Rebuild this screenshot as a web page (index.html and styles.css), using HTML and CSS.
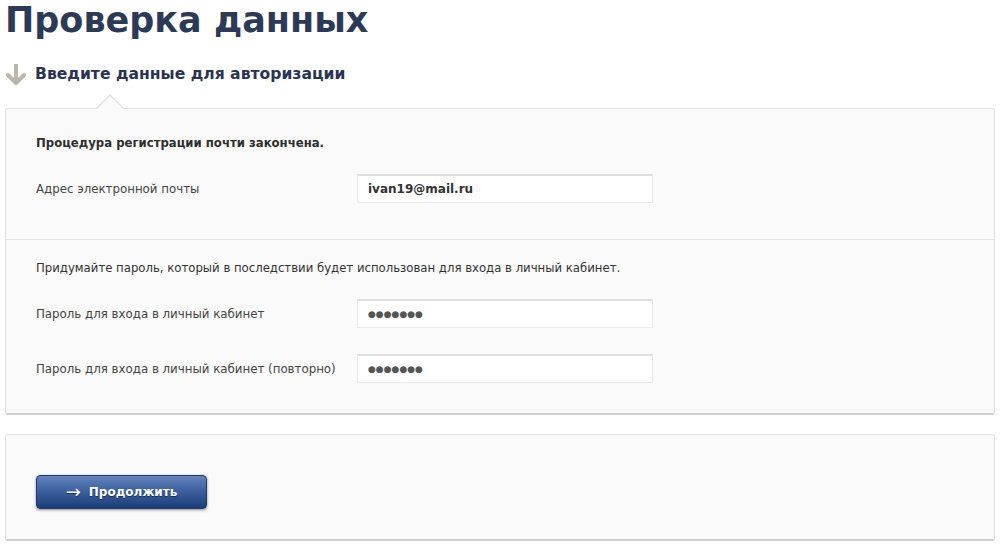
FILE: index.html
```html
<!DOCTYPE html>
<html lang="ru">
<head>
<meta charset="utf-8">
<link rel="stylesheet" href="styles.css">
</head>
<body>
<h1 class="title">Проверка данных</h1>
<div class="step">
  <svg class="step-icon" width="22" height="22" viewBox="0 0 22 22"><path d="M11 1 V19 M3 11 L11 19 L19 11" fill="none" stroke="#bcb5ac" stroke-width="4" stroke-linecap="round" stroke-linejoin="round"/></svg>
  <h2 class="step-title">Введите данные для авторизации</h2>
</div>
<div class="card card-notch">
  <div class="section section-first">
    <p class="note note-bold">Процедура регистрации почти закончена.</p>
    <div class="row">
      <label class="label">Адрес электронной почты</label>
      <div class="input input-text">ivan19@mail.ru</div>
    </div>
  </div>
  <div class="section section-second">
    <p class="note">Придумайте пароль, который в последствии будет использован для входа в личный кабинет.</p>
    <div class="row">
      <label class="label">Пароль для входа в личный кабинет</label>
      <div class="input input-pass">●●●●●●●</div>
    </div>
    <div class="row row-gap">
      <label class="label">Пароль для входа в личный кабинет (повторно)</label>
      <div class="input input-pass">●●●●●●●</div>
    </div>
  </div>
</div>
<div class="card card-actions">
  <button class="btn"><span class="btn-arrow">→</span>Продолжить</button>
</div>
</body>
</html>
```
FILE: styles.css
```css
html, body {
  margin: 0;
  padding: 0;
  background: #ffffff;
}
body {
  font-family: "DejaVu Sans", Verdana, sans-serif;
  width: 1000px;
  height: 545px;
  overflow: hidden;
}
.title {
  margin: 0;
  padding: 0 0 0 5px;
  font-size: 35px;
  line-height: 40px;
  font-weight: bold;
  color: #2d3a56;
}
.step {
  display: flex;
  align-items: center;
  gap: 8px;
  margin: 22px 0 0 5px;
  height: 24px;
}
.step-icon {
  display: block;
  margin-top: 1px;
}
.step-title {
  margin: 0;
  font-size: 15.6px;
  line-height: 20px;
  font-weight: bold;
  color: #2a3450;
}
.card {
  position: relative;
  margin: 0 5px;
  background: #fafafa;
  border: 1px solid #e2e2e2;
  border-bottom: 2px solid #cfcfcf;
  border-radius: 3px;
}
.card-notch {
  margin-top: 22px;
}
.card-notch::before {
  content: "";
  position: absolute;
  left: 89px;
  top: -15px;
  border-left: 15px solid transparent;
  border-right: 15px solid transparent;
  border-bottom: 15px solid #e2e2e2;
}
.card-notch::after {
  content: "";
  position: absolute;
  left: 90px;
  top: -13px;
  border-left: 14px solid transparent;
  border-right: 14px solid transparent;
  border-bottom: 14px solid #fafafa;
}
.section {
  padding: 0 30px;
}
.section-first {
  padding-top: 26px;
  padding-bottom: 36px;
  border-bottom: 1px solid #e4e4e4;
}
.section-second {
  padding-top: 20px;
  padding-bottom: 30px;
}
.note {
  margin: 0;
  font-size: 11.7px;
  line-height: 16px;
  color: #333;
}
.note-bold {
  font-weight: bold;
  color: #2e2e2e;
}
.row {
  display: flex;
  align-items: center;
  margin-top: 23px;
}
.row-gap {
  margin-top: 26px;
}
.label {
  width: 321px;
  font-size: 11.8px;
  color: #444;
}
.input {
  box-sizing: border-box;
  width: 296px;
  height: 29px;
  background: #fff;
  border: 1px solid #ebebeb;
  border-top: 2px solid #dedede;
  padding: 0 10px;
  display: flex;
  align-items: center;
  color: #333;
}
.input-text {
  font-size: 12px;
  font-weight: bold;
}
.input-pass {
  font-size: 9px;
  color: #555;
}
.card-actions {
  margin-top: 19px;
  height: 107px;
  padding: 40px 0 0 30px;
  box-sizing: border-box;
}
.btn {
  display: flex;
  align-items: center;
  justify-content: center;
  gap: 8px;
  width: 171px;
  height: 34px;
  border: 1px solid #1d3a6e;
  border-radius: 4px;
  background: linear-gradient(#6483b8 0%, #3e62a0 45%, #1c3d78 100%);
  box-shadow: 0 1px 3px rgba(0,0,0,0.45);
  color: #fff;
  font-family: "DejaVu Sans", Verdana, sans-serif;
  font-size: 12px;
  font-weight: bold;
  text-shadow: 0 1px 1px rgba(0,0,0,0.5);
  cursor: pointer;
}
.btn-arrow {
  font-weight: normal;
  font-size: 18px;
  line-height: 1;
}
```
